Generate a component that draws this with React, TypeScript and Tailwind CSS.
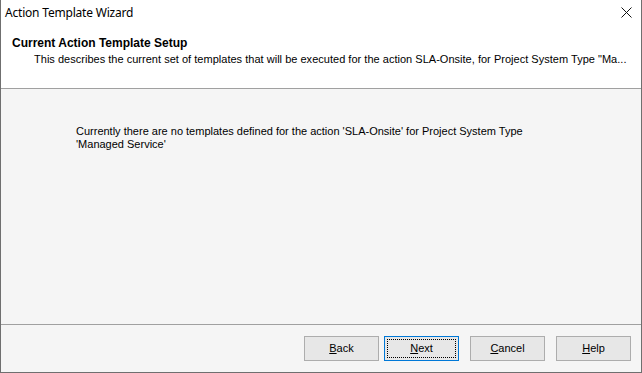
const buttons = [
  { key: "B", rest: "ack" },
  { key: "N", rest: "ext", focused: true },
  { key: "C", rest: "ancel" },
  { key: "H", rest: "elp" },
];

export default function App() {
  return (
    <div className="w-[642px] h-[373px] flex flex-col bg-white border-x border-b border-[#6f6f6f] text-[#000] font-['Liberation_Sans',Arial,sans-serif] overflow-hidden">
      {/* title bar */}
      <div className="h-[29px] flex items-center justify-between pl-[4px] pr-[9px] bg-white">
        <span className="text-[12px] font-['Noto_Sans',sans-serif] tracking-[-0.2px] mt-[-3px]">Action Template Wizard</span>
        <svg width="11" height="11" viewBox="0 0 11 11" className="mt-[-4px]">
          <path d="M0.5 0.5 L10.5 10.5 M10.5 0.5 L0.5 10.5" stroke="#111" strokeWidth="1" fill="none" />
        </svg>
      </div>

      {/* header */}
      <div className="h-[59px] pl-[11px] pt-[7px] bg-white">
        <div className="text-[12px] font-bold leading-[15px]">Current Action Template Setup</div>
        <div className="text-[11px] leading-[17px] pl-[22px] whitespace-nowrap tracking-[0.02px]">
          This describes the current set of templates that will be executed for the action SLA-Onsite, for Project System Type "Ma...
        </div>
      </div>
      <div className="h-px bg-[#a0a0a0]" />

      {/* body */}
      <div className="flex-1 bg-[#f5f5f5] pl-[75px] pt-[36px]">
        <p className="text-[11px] leading-[13px] w-[460px]">
          Currently there are no templates defined for the action 'SLA-Onsite' for Project System Type
          'Managed Service'
        </p>
      </div>
      <div className="h-px bg-[#a0a0a0]" />

      {/* footer */}
      <div className="h-[47px] bg-[#f5f5f5] flex items-start justify-end gap-[5px] pt-[11px] pr-[10px]">
        {buttons.map((b, i) => (
          <div
            key={b.key}
            className={
              "w-[75px] h-[25px] flex items-center justify-center bg-[#e7e7e7] border text-[11px] " +
              (b.focused ? "border-[#0078d7] p-[2px] " : "border-[#adadad] ") +
              (i === 2 ? "ml-[6px] " : "") +
              (i === 3 ? "ml-[6px] " : "")
            }
          >
            {b.focused ? (
              <div className="w-full h-full border border-dotted border-black flex items-center justify-center">
                <span><span className="underline">{b.key}</span>{b.rest}</span>
              </div>
            ) : (
              <span><span className="underline">{b.key}</span>{b.rest}</span>
            )}
          </div>
        ))}
      </div>
    </div>
  );
}
